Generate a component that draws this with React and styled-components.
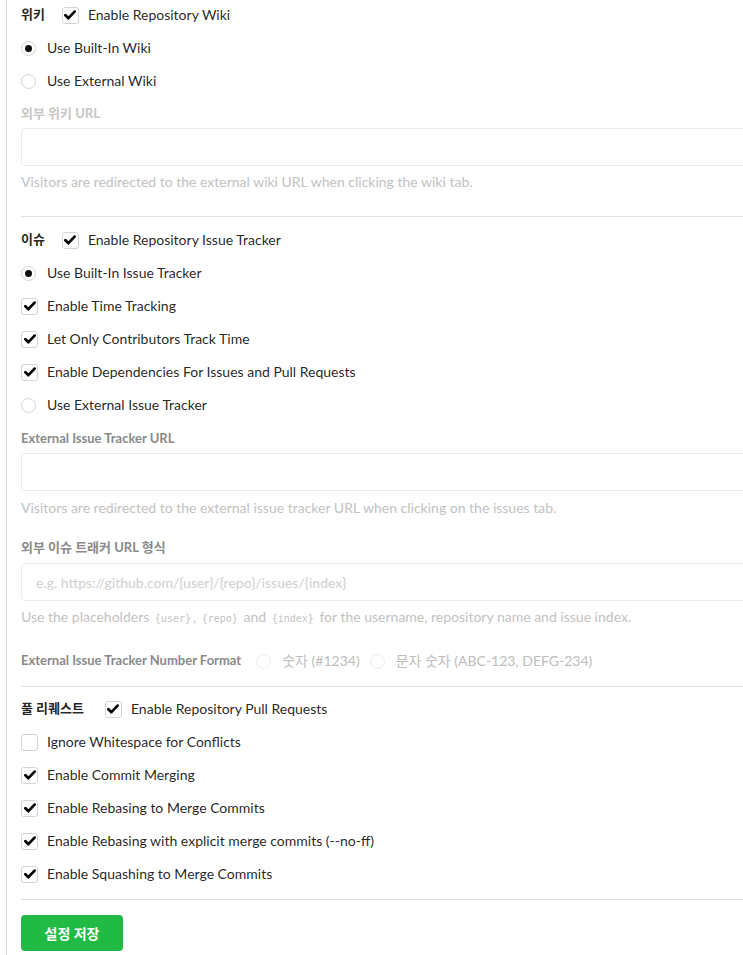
import styled, { createGlobalStyle } from "styled-components";

const GlobalStyle = createGlobalStyle`
  html, body {
    margin: 0;
    padding: 0;
    background: #fff;
    overflow: hidden;
  }
  body {
    font-family: Lato, "Noto Sans CJK KR", "Noto Sans", sans-serif;
    font-size: 14px;
    color: rgba(0, 0, 0, 0.87);
  }
`;

const Page = styled.div`
  margin-left: 6px;
  border-left: 1px solid #d8d8d8;
  padding: 5px 0 0 14px;
  width: 800px;
  min-height: 100vh;
  box-sizing: border-box;
`;

const Form = styled.form`
  display: flex;
  flex-direction: column;
`;

const Row = styled.div`
  display: flex;
  align-items: center;
  height: 19px;
  line-height: 19px;
  margin-bottom: ${(p) => (p.$mb !== undefined ? p.$mb : 14)}px;
  margin-top: ${(p) => p.$mt || 0}px;
`;

const Title = styled.span`
  font-family: Lato, "Noto Sans CJK KR", sans-serif;
  font-weight: 700;
  font-size: 13px;
  color: rgba(0, 0, 0, 0.87);
  margin-right: ${(p) => p.$gap || 16}px;
`;

const OptionLabel = styled.label`
  display: inline-flex;
  align-items: center;
  cursor: pointer;
  color: ${(p) => (p.$muted ? "#bdbdbd" : "rgba(0, 0, 0, 0.87)")};
  margin-right: ${(p) => p.$mr || 0}px;
`;

const Box = styled.span`
  width: 17px;
  height: 17px;
  box-sizing: border-box;
  border: 1px solid #d4d4d5;
  border-radius: 3px;
  background: #fff;
  display: inline-flex;
  align-items: center;
  justify-content: center;
  margin: 1px 9px 0 0;
  flex-shrink: 0;
`;

const Circle = styled.span`
  width: 15px;
  height: 15px;
  box-sizing: border-box;
  border: 1px solid ${(p) => (p.$muted ? "#ececec" : "#d4d4d5")};
  border-radius: 50%;
  background: #fff;
  display: inline-flex;
  align-items: center;
  justify-content: center;
  margin: 2px 11px 0 0;
  flex-shrink: 0;

  &::after {
    content: "";
    display: ${(p) => (p.$on ? "block" : "none")};
    width: 7px;
    height: 7px;
    border-radius: 50%;
    background: rgba(0, 0, 0, 0.95);
  }
`;

const FieldLabel = styled.label`
  display: block;
  font-weight: 700;
  font-size: 13px;
  line-height: 19px;
  white-space: nowrap;
  color: ${(p) => p.$color || "#8a8a8a"};
  margin-top: ${(p) => p.$mt || 0}px;
  margin-bottom: ${(p) => (p.$mb !== undefined ? p.$mb : 5)}px;
  margin-right: ${(p) => p.$mr || 0}px;
`;

const Input = styled.input`
  display: block;
  width: 100%;
  height: 38px;
  box-sizing: border-box;
  border: 1px solid #ececec;
  border-radius: 4px;
  padding: 0 14px;
  font-family: Lato, sans-serif;
  font-size: 14px;
  background: #fff;
  margin-bottom: ${(p) => p.$mb || 6}px;

  &::placeholder {
    color: #cfcfcf;
  }
`;

const Help = styled.p`
  margin: 0;
  font-size: 14px;
  line-height: 19px;
  color: #c2c2c2;
  white-space: nowrap;
`;

const Code = styled.code`
  font-family: "DejaVu Sans Mono", "Liberation Mono", monospace;
  font-size: 10px;
  padding: 0 2px;
  color: #c2c2c2;
`;

const Divider = styled.div`
  border-top: 1px solid rgba(34, 36, 38, 0.15);
  height: 0;
  margin-top: ${(p) => p.$mt}px;
  margin-bottom: ${(p) => p.$mb}px;
`;

const SaveButton = styled.button`
  align-self: flex-start;
  height: 36px;
  padding: 0 23.5px;
  border: none;
  border-radius: 4px;
  background: #21ba45;
  color: #fff;
  font-family: Lato, "Noto Sans CJK KR", sans-serif;
  font-weight: 700;
  font-size: 14px;
  cursor: pointer;
`;

const CheckMark = () => (
  <svg width="12" height="10" viewBox="0 0 12 10">
    <path
      d="M1.4 5.2 L4.4 8.2 L10.6 1.6"
      fill="none"
      stroke="#000"
      strokeWidth="2.7"
      strokeLinecap="round"
      strokeLinejoin="round"
    />
  </svg>
);

const Check = ({ on, children }) => (
  <OptionLabel>
    <Box>{on && <CheckMark />}</Box>
    {children}
  </OptionLabel>
);

const Radio = ({ on, muted, children, mr }) => (
  <OptionLabel $muted={muted} $mr={mr}>
    <Circle $on={on} $muted={muted} />
    {children}
  </OptionLabel>
);

export default function App() {
  return (
    <Page>
      <GlobalStyle />
      <Form>
        <Row>
          <Title $gap={17}>위키</Title>
          <Check on>Enable Repository Wiki</Check>
        </Row>
        <Row>
          <Radio on>Use Built-In Wiki</Radio>
        </Row>
        <Row>
          <Radio>Use External Wiki</Radio>
        </Row>
        <FieldLabel $color="#c6c6c6">외부 위키 URL</FieldLabel>
        <Input />
        <Help>Visitors are redirected to the external wiki URL when clicking the wiki tab.</Help>

        <Divider $mt={25} $mb={13} />

        <Row>
          <Title $gap={17}>이슈</Title>
          <Check on>Enable Repository Issue Tracker</Check>
        </Row>
        <Row>
          <Radio on>Use Built-In Issue Tracker</Radio>
        </Row>
        <Row>
          <Check on>Enable Time Tracking</Check>
        </Row>
        <Row>
          <Check on>Let Only Contributors Track Time</Check>
        </Row>
        <Row>
          <Check on>Enable Dependencies For Issues and Pull Requests</Check>
        </Row>
        <Row>
          <Radio>Use External Issue Tracker</Radio>
        </Row>
        <FieldLabel $mt={1}>External Issue Tracker URL</FieldLabel>
        <Input $mb={7} />
        <Help>
          Visitors are redirected to the external issue tracker URL when clicking on the issues tab.
        </Help>
        <FieldLabel $mt={21} $mb={6}>
          외부 이슈 트래커 URL 형식
        </FieldLabel>
        <Input placeholder="e.g. https://github.com/{user}/{repo}/issues/{index}" />
        <Help>
          Use the placeholders <Code>{"{user}"}</Code>, <Code>{"{repo}"}</Code> and{" "}
          <Code>{"{index}"}</Code> for the username, repository name and issue index.
        </Help>
        <Row $mt={23} $mb={0}>
          <FieldLabel $mb={0} $mr={15}>
            External Issue Tracker Number Format
          </FieldLabel>
          <Radio muted mr={10}>
            숫자 (#1234)
          </Radio>
          <Radio muted>문자 숫자 (ABC-123, DEFG-234)</Radio>
        </Row>

        <Divider $mt={16} $mb={12} />

        <Row>
          <Title $gap={21}>풀 리퀘스트</Title>
          <Check on>Enable Repository Pull Requests</Check>
        </Row>
        <Row>
          <Check>Ignore Whitespace for Conflicts</Check>
        </Row>
        <Row>
          <Check on>Enable Commit Merging</Check>
        </Row>
        <Row>
          <Check on>Enable Rebasing to Merge Commits</Check>
        </Row>
        <Row>
          <Check on>Enable Rebasing with explicit merge commits (--no-ff)</Check>
        </Row>
        <Row $mb={1}>
          <Check on>Enable Squashing to Merge Commits</Check>
        </Row>

        <Divider $mt={15} $mb={15} />

        <SaveButton type="button">설정 저장</SaveButton>
      </Form>
    </Page>
  );
}
